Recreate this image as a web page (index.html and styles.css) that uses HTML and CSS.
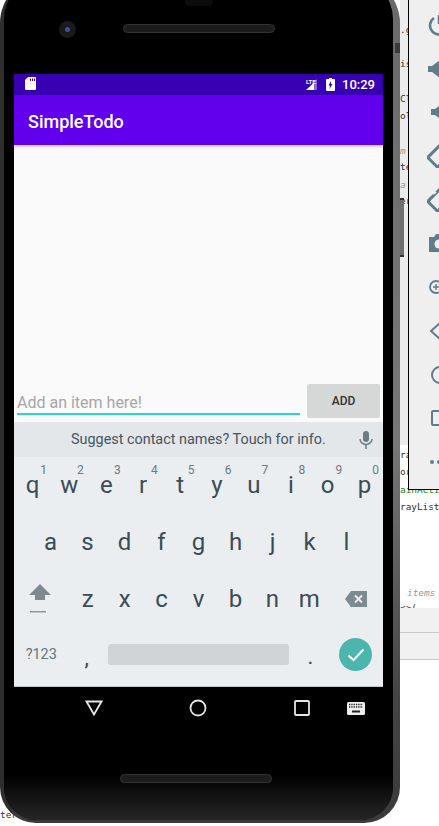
FILE: index.html
```html
<!DOCTYPE html>
<html>
	<head>
		<meta charset="utf-8" />
		<meta name="viewport" content="width=device-width, initial-scale=1" />
		<title>SimpleTodo</title>
		<link rel="stylesheet" href="styles.css">
	</head>
	<body>
		<!-- bits of the IDE showing behind the emulator -->
		<div class="ide">
			<div class="ide-gutter"></div>
			<span class="code" style="top:22px">.g</span>
			<span class="code" style="top:56px">is</span>
			<span class="code" style="top:91px">Cl</span>
			<span class="code" style="top:108px">ol</span>
			<span class="code note" style="top:143px">m</span>
			<span class="code" style="top:159px">te</span>
			<span class="code note" style="top:177px">a</span>
			<span class="code purple" style="top:193px">er</span>
			<span class="code" style="top:447px">ra</span>
			<span class="code" style="top:464px">or</span>
			<span class="code green" style="top:482px">ainActi</span>
			<span class="code" style="top:499px">rayList</span>
			<span class="code note" style="top:585px;left:407px">items</span>
			<span class="code" style="top:600px">&lt;&gt;(</span>
			<span class="code" style="left:0;top:807px">ter</span>
			<div class="ide-bar one"></div>
			<div class="ide-bar two"></div>
		</div>

		<div class="phone">
			<div class="phone-body">
				<div class="bezel-top">
					<div class="sensor"></div>
					<div class="camera"><div class="lens"></div></div>
					<div class="speaker"></div>
				</div>

				<div class="screen">
					<div class="status-bar">
						<svg class="sd" width="11" height="13" viewBox="0 0 11 13"><path d="M3 0h7a1 1 0 0 1 1 1v11a1 1 0 0 1-1 1H1a1 1 0 0 1-1-1V3z" fill="#fff"/><path d="M5 1.500h1v2.500H5zM7 1.500h1v2.500H7zM9 1.500h1v2.500H9z" fill="#3700b3"/></svg>
						<div class="spacer"></div>
						<svg class="signal" width="16" height="13" viewBox="0 0 16 13"><path d="M15 1v11H12V4z" fill="#fff" opacity=".4"/><path d="M12 4.500V12H4z" fill="#fff"/></svg>
						<span class="lte">LTE</span>
						<svg class="battery" width="9" height="13" viewBox="0 0 9 13"><path d="M3 0h3v1h2a1 1 0 0 1 1 1v10a1 1 0 0 1-1 1H1a1 1 0 0 1-1-1V2a1 1 0 0 1 1-1h2z" fill="#fff"/><path d="M5 3 2.500 7.500H4L3.500 11 6.500 6H5z" fill="#3700b3"/></svg>
						<span class="time">10:29</span>
					</div>
					<div class="app-bar">SimpleTodo</div>
					<div class="content">
						<div class="add-row">
							<div class="item-input">Add an item here!</div>
							<div class="add-btn">ADD</div>
						</div>
					</div>

					<div class="keyboard">
						<div class="suggest">
							<span class="suggest-text">Suggest contact names? Touch for info.</span>
							<svg class="mic" width="14" height="18" viewBox="0 0 14 18"><rect x="4" y="0" width="6" height="11" rx="3" fill="#6d7b84"/><path d="M1 8a6 5.500 0 0 0 12 0" fill="none" stroke="#6d7b84" stroke-width="1.500"/><path d="M7 13v5" stroke="#6d7b84" stroke-width="1.500"/></svg>
						</div>
						<div class="kb-row">
							<div class="key"><i>1</i>q</div>
							<div class="key"><i>2</i>w</div>
							<div class="key"><i>3</i>e</div>
							<div class="key"><i>4</i>r</div>
							<div class="key"><i>5</i>t</div>
							<div class="key"><i>6</i>y</div>
							<div class="key"><i>7</i>u</div>
							<div class="key"><i>8</i>i</div>
							<div class="key"><i>9</i>o</div>
							<div class="key"><i>0</i>p</div>
						</div>
						<div class="kb-row home">
							<div class="key">a</div>
							<div class="key">s</div>
							<div class="key">d</div>
							<div class="key">f</div>
							<div class="key">g</div>
							<div class="key">h</div>
							<div class="key">j</div>
							<div class="key">k</div>
							<div class="key">l</div>
						</div>
						<div class="kb-row third">
							<div class="key wide">
								<svg class="shift" width="22" height="29" viewBox="0 0 22 29"><path d="M11 0 22 11H16V16H6V11H0z" fill="#7d8a92"/><rect x="1" y="27" width="16" height="1.500" fill="#8d989f"/></svg>
							</div>
							<div class="key">z</div>
							<div class="key">x</div>
							<div class="key">c</div>
							<div class="key">v</div>
							<div class="key">b</div>
							<div class="key">n</div>
							<div class="key">m</div>
							<div class="key wide">
								<svg class="bksp" width="22" height="16" viewBox="0 0 22 16"><path d="M6 0H22V16H6L0 8z" fill="#7d8a92"/><path d="M10 4.500l7 7M17 4.500l-7 7" stroke="#eaeef1" stroke-width="2"/></svg>
							</div>
						</div>
						<div class="kb-row">
							<div class="key wide sym">?123</div>
							<div class="key comma">,</div>
							<div class="space-wrap"><div class="space-bar"></div></div>
							<div class="key dot">.</div>
							<div class="key wide">
								<div class="done">
									<svg width="18" height="14" viewBox="0 0 18 14"><path d="M1.500 7.500 6.500 12 16.500 1.500" fill="none" stroke="#fff" stroke-width="2"/></svg>
								</div>
							</div>
						</div>
					</div>
				</div>

				<div class="nav-row">
					<svg width="18" height="16" viewBox="0 0 18 16"><path d="M1.500 1.500h15L9 14.500z" fill="none" stroke="#e4e4e4" stroke-width="1.800"/></svg>
					<svg width="18" height="18" viewBox="0 0 18 18"><circle cx="9" cy="9" r="7.500" fill="none" stroke="#e4e4e4" stroke-width="1.800"/></svg>
					<svg width="18" height="16" viewBox="-1 0 18 16"><rect x="1" y="1" width="14" height="14" rx="1" fill="none" stroke="#e4e4e4" stroke-width="1.800"/></svg>
					<svg class="nav-kb" width="18" height="13" viewBox="0 0 18 13"><rect width="18" height="13" rx="1.500" fill="#eee"/><path d="M2 2.500h14M2 5h14" stroke="#222" stroke-width="1.300" stroke-dasharray="1.300 1"/><rect x="5" y="8.500" width="8" height="2" fill="#222"/></svg>
				</div>
				<div class="bezel-bottom"><div class="speaker low"></div></div>
			</div>
		</div>
		<div class="edge-mark"></div>
		<div class="vol-btn"></div>

		<!-- emulator side toolbar, cut off by the window -->
		<div class="toolbar">
			<svg width="24" height="24" viewBox="0 0 24 24"><path d="M12 2v9M7 5a9 9 0 1 0 10 0" fill="none" stroke="#607d8b" stroke-width="2.500"/></svg>
			<svg width="24" height="24" viewBox="0 0 24 24"><path d="M1 9h4l8-6v18l-8-6H1z" fill="#607d8b"/></svg>
			<svg width="24" height="24" viewBox="0 0 24 24"><path d="M4 9h4l8-6v18l-8-6H4z" fill="#607d8b"/></svg>
			<svg width="24" height="24" viewBox="0 0 24 24"><rect x="3" y="5" width="18" height="14" rx="1.500" transform="rotate(-45 12 12)" fill="none" stroke="#607d8b" stroke-width="3"/></svg>
			<svg width="24" height="24" viewBox="0 0 24 24"><rect x="5" y="3" width="14" height="18" rx="1.500" transform="rotate(45 12 12)" fill="none" stroke="#607d8b" stroke-width="3"/><path d="M6 6 9 4" stroke="#efefef" stroke-width="2"/></svg>
			<svg width="24" height="24" viewBox="0 0 24 24"><path d="M2 6h5l2-3h6l2 3h5v15H2z" fill="#607d8b"/><circle cx="12" cy="13" r="4.500" fill="#efefef"/></svg>
			<svg width="24" height="24" viewBox="0 0 24 24"><circle cx="9" cy="12" r="6" fill="none" stroke="#607d8b" stroke-width="1.800"/><path d="M9 9v6M6 12h6" stroke="#607d8b" stroke-width="1.500"/></svg>
			<svg width="24" height="24" viewBox="0 0 24 24"><path d="M14 3 4 12l10 9" fill="none" stroke="#607d8b" stroke-width="2"/></svg>
			<svg width="24" height="24" viewBox="0 0 24 24"><circle cx="13" cy="12" r="8" fill="none" stroke="#607d8b" stroke-width="2"/></svg>
			<svg width="24" height="24" viewBox="0 0 24 24"><rect x="5" y="5" width="15" height="14" rx="1" fill="none" stroke="#607d8b" stroke-width="2"/></svg>
			<svg width="24" height="24" viewBox="0 0 24 24"><circle cx="5" cy="12" r="2" fill="#607d8b"/><circle cx="12" cy="12" r="2" fill="#607d8b"/><circle cx="19" cy="12" r="2" fill="#607d8b"/></svg>
		</div>
	</body>
</html>
```

FILE: styles.css
```css
html, body {
    margin: 0;
    height: 826px;
    overflow: hidden;
    background-color: #fff;
    font-family: Roboto, "Noto Sans", sans-serif;
}

/* ide behind the emulator */
.ide {
    position: absolute;
    top: 0;
    left: 0;
    width: 439px;
    height: 826px;
    overflow: hidden;
}

.ide-gutter {
    position: absolute;
    top: 0;
    left: 400px;
    width: 9px;
    height: 445px;
    background-color: #ececec;
}

.code {
    position: absolute;
    left: 400px;
    font-family: "DejaVu Sans Mono", monospace;
    font-size: 9.400px;
    line-height: 15px;
    color: #333;
}

.note {
    color: #999;
    font-style: italic;
}

.purple {
    color: #660e7a;
}

.green {
    color: #1a7a1a;
}

.ide-bar {
    position: absolute;
    left: 400px;
    width: 39px;
    background-color: #f1f1f1;
    border-bottom: 1px solid #c8c8c8;
}

.ide-bar.one {
    top: 608px;
    height: 24px;
}

.ide-bar.two {
    top: 633px;
    height: 26px;
}

/* phone */
.phone {
    position: relative;
    width: 400px;
    height: 846px;
    margin-top: -23px;
    box-sizing: border-box;
    padding: 0 7px 3px 4px;
    border-radius: 46px 46px 36px 36px;
    background: linear-gradient(90deg, #2e2e2e 0, #2e2e2e 12px, transparent 12px),
        linear-gradient(#6a6a6a 0%, #777 55%, #444 85%, #3a3a3a 100%);
}

.phone-body {
    height: 100%;
    box-sizing: border-box;
    padding: 0 10px;
    background-color: #000;
    border-radius: 42px 42px 33px 33px;
    display: flex;
    flex-direction: column;
}

.bezel-top {
    position: relative;
    height: 97px;
    flex-shrink: 0;
}

.sensor {
    position: absolute;
    top: 20px;
    left: 171px;
    width: 28px;
    height: 9px;
    border-radius: 5px;
    background-color: #0c0c0c;
}

.camera {
    position: absolute;
    top: 44px;
    left: 45px;
    width: 17px;
    height: 17px;
    border-radius: 50%;
    background-color: #1a1a1a;
    display: flex;
    align-items: center;
    justify-content: center;
}

.lens {
    width: 5px;
    height: 5px;
    border-radius: 50%;
    background-color: #3a4fa0;
}

.speaker {
    position: absolute;
    top: 47px;
    left: 109px;
    width: 152px;
    height: 9px;
    box-sizing: border-box;
    border: 1px solid #333;
    border-radius: 5px;
    background-color: #1c1c1c;
}

.screen {
    width: 369px;
    height: 613px;
    flex-shrink: 0;
    display: flex;
    flex-direction: column;
    background-color: #fafafa;
}

.status-bar {
    height: 21px;
    background-color: #3700b3;
    display: flex;
    align-items: center;
    padding: 0 8px 0 11px;
    color: #fff;
    position: relative;
}

.spacer {
    flex: 1;
}

.sd {
    margin-top: -2px;
}

.signal {
    margin-top: -1px;
}

.lte {
    position: absolute;
    left: 292px;
    top: 4px;
    font-size: 6px;
    font-weight: 700;
}

.battery {
    margin: -1px 0 0 8px;
}

.time {
    margin-left: 7px;
    font-size: 13px;
    font-weight: 500;
}

.app-bar {
    height: 50px;
    background-color: #6200ee;
    color: #fff;
    font-size: 18px;
    font-weight: 500;
    line-height: 53px;
    padding-left: 14px;
    box-shadow: 0 1px 3px rgba(0,0,0,.3);
}

.content {
    flex: 1;
    display: flex;
    align-items: flex-end;
    padding: 0 3px 4px;
}

.add-row {
    flex: 1;
    display: flex;
    align-items: flex-end;
    gap: 7px;
}

.item-input {
    flex: 1;
    height: 30px;
    line-height: 40px;
    font-size: 16px;
    color: #a6a6a6;
    border-bottom: 2px solid #2ad6c6;
    margin-bottom: 3px;
}

.add-btn {
    width: 73px;
    height: 34px;
    line-height: 34px;
    text-align: center;
    font-size: 12px;
    font-weight: 500;
    color: #333;
    background-color: #d6d7d7;
    border-radius: 2px;
}

/* keyboard */
.keyboard {
    height: 265px;
    flex-shrink: 0;
    background-color: #eaeef1;
    display: flex;
    flex-direction: column;
    border-bottom: 1px solid #c4c8cb;
    box-sizing: border-box;
}

.suggest {
    height: 35px;
    flex-shrink: 0;
    background-color: #e3e7ea;
    display: flex;
    align-items: center;
    position: relative;
    padding-left: 57px;
}

.suggest-text {
    font-size: 14.400px;
    color: #47555e;
}

.mic {
    position: absolute;
    right: 10px;
    top: 9px;
}

.kb-row {
    height: 56.500px;
    display: flex;
}

.kb-row.home {
    padding: 0 18px;
}

.kb-row.third {
    padding-top: 1px;
    box-sizing: border-box;
}

.key {
    position: relative;
    flex: 1 1 0;
    display: flex;
    align-items: center;
    justify-content: center;
    font-size: 24px;
    color: #3c4b55;
}

.key i {
    position: absolute;
    top: 6px;
    right: 4px;
    font-style: normal;
    font-size: 12px;
    color: #6d7b84;
}

.key.wide {
    flex: 1.500 1 0;
}

.shift {
    margin-right: 4px;
}

.bksp {
    margin-left: 2px;
}

.sym {
    font-size: 14.400px;
    color: #68757d;
}

.comma {
    align-items: flex-start;
    padding-top: 18px;
    box-sizing: border-box;
    font-size: 22px;
}

.dot {
    align-items: flex-start;
    padding-top: 17px;
    box-sizing: border-box;
    font-size: 22px;
}

.space-wrap {
    flex: 5 1 0;
    display: flex;
    align-items: center;
    padding: 0 3px;
}

.space-bar {
    width: 100%;
    height: 21px;
    border-radius: 3px;
    background-color: #d0d4d7;
}

.done {
    width: 33px;
    height: 33px;
    border-radius: 50%;
    background-color: #4db6ac;
    display: flex;
    align-items: center;
    justify-content: center;
}

/* nav buttons */
.nav-row {
    position: relative;
    height: 42px;
    flex-shrink: 0;
    display: flex;
    align-items: center;
    padding-left: 71px;
    gap: 86px;
}

.nav-kb {
    position: absolute;
    left: 333px;
    top: 15px;
}

.bezel-bottom {
    position: relative;
    flex: 1;
    margin: 0 -10px;
    border-radius: 0 0 33px 33px;
    background: linear-gradient(#000 50%, #262626);
}

.speaker.low {
    top: 45px;
    left: 116px;
}

.edge-mark {
    position: absolute;
    left: 395px;
    top: 43px;
    width: 5px;
    height: 10px;
    background-color: #3a3a3a;
}

.vol-btn {
    position: absolute;
    left: 400px;
    top: 198px;
    width: 4px;
    height: 59px;
    box-sizing: border-box;
    background-color: #6e6e6e;
    border-top: 2px solid #333;
    border-bottom: 2px solid #333;
}

/* emulator toolbar, runs on past the window edge */
.toolbar {
    position: absolute;
    top: 0;
    left: 408px;
    width: 31px;
    height: 490px;
    overflow: hidden;
    box-sizing: border-box;
    background-color: #efefef;
    border-left: 1px solid #000;
    border-bottom: 1px solid #000;
    padding: 13px 0 15px 18px;
    display: flex;
    flex-direction: column;
    justify-content: space-between;
}

.toolbar svg {
    flex-shrink: 0;
}
```
